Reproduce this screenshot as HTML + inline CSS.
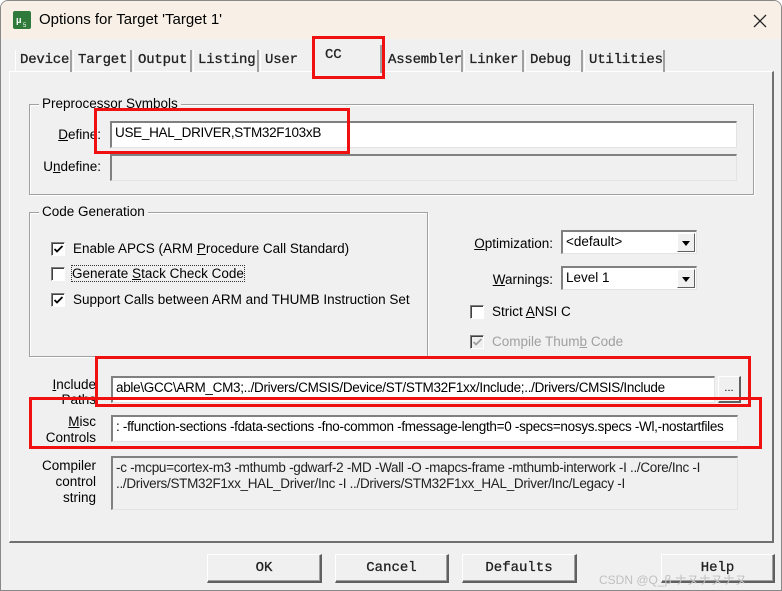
<!DOCTYPE html>
<html><head><meta charset="utf-8"><style>
*{box-sizing:border-box;margin:0;padding:0}
body{width:782px;height:591px;overflow:hidden;background:#fff;font-family:"Liberation Sans",Arial,sans-serif;font-size:14px;color:#000;position:relative}
.win{position:absolute;left:0;top:0;width:782px;height:591px;background:#f0f0f0;border:1px solid #888;border-radius:8px 8px 0 0;overflow:hidden}
.title{position:absolute;left:0;top:0;width:782px;height:38px;background:#f8f0e7}
.a{position:absolute}
.tab{position:absolute;top:49px;height:22px;font-family:"Liberation Mono",monospace;font-size:14px;color:#222;padding:2px 0 0 4px;border-right:2px solid #a0a0a0;border-left:1px solid #fff;letter-spacing:-0.2px;-webkit-text-stroke:0.3px #222}
.panel{position:absolute;left:8px;top:70px;width:765px;height:472px;border:1px solid #fff;border-right:2px solid #707070;border-bottom:2px solid #707070}
.grp{position:absolute;border:1px solid #a0a0a0;box-shadow:1px 1px 0 #fff inset,1px 1px 0 #fff}
.gl{position:absolute;background:#f0f0f0;padding:0 3px;font-size:13.5px}
.inp{position:absolute;background:#fff;border-top:2px solid #808080;border-left:2px solid #808080;border-right:1px solid #e3e3e3;border-bottom:1px solid #e3e3e3;font-size:13.5px;padding:2px 3px;white-space:nowrap;overflow:hidden;letter-spacing:-0.3px}
.dis{background:#f0f0f0}
.cb{position:absolute;width:14px;height:14px;background:#fff;border-top:1px solid #808080;border-left:1px solid #808080;border-right:1px solid #fff;border-bottom:1px solid #fff;box-shadow:1px 1px 0 #404040 inset}
.cb svg{position:absolute;left:2px;top:2px}
.lbl{position:absolute;font-size:13.5px;white-space:nowrap}
.rl{position:absolute;font-size:13.5px;text-align:right;line-height:17px}
.sel{position:absolute;background:#fff;border-top:2px solid #808080;border-left:2px solid #808080;border-right:1px solid #e3e3e3;border-bottom:1px solid #e3e3e3;font-size:13.5px;padding:2px 3px}
.dd{position:absolute;right:1px;top:1px;width:18px;height:19px;background:#f0f0f0;border-right:1px solid #606060;border-bottom:1px solid #606060;border-top:1px solid #fff;border-left:1px solid #fff}
.dd:after{content:"";position:absolute;left:4px;top:7px;border-left:4px solid transparent;border-right:4px solid transparent;border-top:5px solid #000}
.btn{position:absolute;top:553px;height:29px;border-top:1px solid #fff;border-left:1px solid #fff;border-right:2px solid #606060;border-bottom:2px solid #606060;box-shadow:-1px -1px 0 #a0a0a0 inset;font-family:"Liberation Mono",monospace;font-size:14px;text-align:center;line-height:26px;color:#222;-webkit-text-stroke:0.3px #222}
.red{position:absolute;border:3px solid #f01010}
u{text-decoration:underline}
</style></head><body>
<div class="win">
<div class="title"></div>
<svg class="a" style="left:12px;top:10px" width="18" height="18"><rect width="18" height="18" rx="2" fill="#2f7a3a"/><text x="3" y="12" font-size="9" fill="#fff" font-family="Liberation Sans" font-weight="bold">μ</text><text x="10" y="16" font-size="6" fill="#fff" font-family="Liberation Sans">5</text></svg>
<div class="lbl" style="left:38px;top:10px;font-size:15px">Options for Target 'Target 1'</div>
<svg class="a" style="left:752px;top:13px" width="14" height="14"><path d="M1 1L13 13M13 1L1 13" stroke="#222" stroke-width="1.3"/></svg>

<div class="panel"></div>
<div class="tab" style="left:14px;width:57px">Device</div>
<div class="tab" style="left:72px;width:59px">Target</div>
<div class="tab" style="left:132px;width:59px">Output</div>
<div class="tab" style="left:192px;width:66px">Listing</div>
<div class="tab" style="left:259px;width:53px;border-right:none">User</div>
<div class="tab" style="left:313px;top:44px;height:28px;width:68px;background:#f0f0f0;border-bottom:none;padding-left:10px">CC</div>
<div class="tab" style="left:382px;width:80px">Assembler</div>
<div class="tab" style="left:463px;width:60px">Linker</div>
<div class="tab" style="left:524px;width:58px">Debug</div>
<div class="tab" style="left:583px;width:81px">Utilities</div>

<div class="grp" style="left:28px;top:103px;width:725px;height:91px"></div>
<div class="gl" style="left:38px;top:95px">Preprocessor Symbols</div>
<div class="rl" style="left:30px;top:125px;width:70px"><u>D</u>efine:</div>
<div class="inp" style="left:109px;top:120px;width:627px;height:27px">USE_HAL_DRIVER,STM32F103xB</div>
<div class="rl" style="left:30px;top:157px;width:70px">U<u>n</u>define:</div>
<div class="inp dis" style="left:109px;top:153px;width:627px;height:27px"></div>

<div class="grp" style="left:28px;top:211px;width:399px;height:145px"></div>
<div class="gl" style="left:38px;top:203px">Code Generation</div>
<div class="cb" style="left:50px;top:241px"><svg width="9" height="9"><path d="M0.5 4L3 6.5L8.5 1" stroke="#000" stroke-width="1.8" fill="none"/></svg></div>
<div class="lbl" style="left:72px;top:240px">Enable APCS (ARM <u>P</u>rocedure Call Standard)</div>
<div class="cb" style="left:50px;top:266px"></div>
<div class="lbl" style="left:71px;top:265px;outline:1px dotted #333">Generate <u>S</u>tack Check Code</div>
<div class="cb" style="left:50px;top:292px"><svg width="9" height="9"><path d="M0.5 4L3 6.5L8.5 1" stroke="#000" stroke-width="1.8" fill="none"/></svg></div>
<div class="lbl" style="left:72px;top:291px">Support Calls between ARM and THUMB Instruction Set</div>

<div class="rl" style="left:450px;top:234px;width:102px"><u>O</u>ptimization:</div>
<div class="sel" style="left:560px;top:229px;width:136px;height:24px">&lt;default&gt;<div class="dd"></div></div>
<div class="rl" style="left:450px;top:270px;width:102px"><u>W</u>arnings:</div>
<div class="sel" style="left:560px;top:265px;width:136px;height:24px">Level 1<div class="dd"></div></div>
<div class="cb" style="left:469px;top:304px"></div>
<div class="lbl" style="left:491px;top:303px">Strict <u>A</u>NSI C</div>
<div class="cb" style="left:469px;top:334px;background:#f0f0f0"><svg width="9" height="9"><path d="M0.5 4L3 6.5L8.5 1" stroke="#a0a0a0" stroke-width="1.8" fill="none"/></svg></div>
<div class="lbl" style="left:491px;top:333px;color:#a0a0a0">Compile Thum<u>b</u> Code</div>

<div class="rl" style="left:30px;top:376px;width:65px;line-height:15px"><u>I</u>nclude<br>Paths</div>
<div class="inp" style="left:110px;top:375px;width:604px;height:27px">able\GCC\ARM_CM3;../Drivers/CMSIS/Device/ST/STM32F1xx/Include;../Drivers/CMSIS/Include</div>
<div class="a" style="left:717px;top:375px;width:23px;height:27px;border-top:1px solid #fff;border-left:1px solid #fff;border-right:2px solid #606060;border-bottom:2px solid #606060;font-size:11px;text-align:center;line-height:22px">...</div>
<div class="rl" style="left:30px;top:413px;width:65px;line-height:16px"><u>M</u>isc<br>Controls</div>
<div class="inp" style="left:110px;top:414px;width:627px;height:27px">: -ffunction-sections -fdata-sections -fno-common -fmessage-length=0 -specs=nosys.specs -Wl,-nostartfiles</div>
<div class="rl" style="left:30px;top:457px;width:65px;line-height:16px">Compiler<br>control<br>string</div>
<div class="inp dis" style="left:110px;top:455px;width:627px;height:54px;white-space:normal;line-height:16px;color:#222">-c -mcpu=cortex-m3 -mthumb -gdwarf-2 -MD -Wall -O -mapcs-frame -mthumb-interwork -I ../Core/Inc -I ../Drivers/STM32F1xx_HAL_Driver/Inc -I ../Drivers/STM32F1xx_HAL_Driver/Inc/Legacy -I</div>

<div class="btn" style="left:206px;width:115px">OK</div>
<div class="btn" style="left:334px;width:114px">Cancel</div>
<div class="btn" style="left:461px;width:115px">Defaults</div>
<div class="btn" style="left:660px;width:114px">Help</div>
<div class="lbl" style="left:598px;top:570px;font-size:12px;color:#c0c0c0">CSDN @Q_β ナヌナヌナヌ</div>

<div class="red" style="left:311px;top:35px;width:73px;height:43px"></div>
<div class="red" style="left:93px;top:107px;width:256px;height:46px"></div>
<div class="red" style="left:94px;top:355px;width:656px;height:51px"></div>
<div class="red" style="left:28px;top:396px;width:733px;height:52px"></div>
</div>
</body></html>
